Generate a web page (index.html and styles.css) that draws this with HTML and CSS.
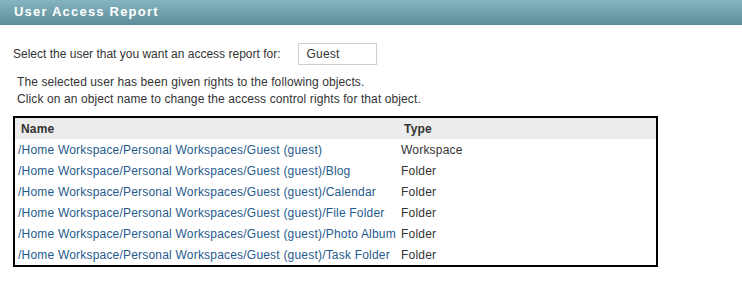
FILE: index.html
```html
<!DOCTYPE html>
<html lang="en">
<head>
    <meta charset="UTF-8">
    <title>User Access Report</title>
    <link rel="stylesheet" href="styles.css">
</head>
<body>
    <div class="titlebar">User Access Report</div>

    <div class="content">
        <div class="pick">
            <span class="pick-label">Select the user that you want an access report for:</span>
            <input type="text" class="user" value="Guest">
        </div>

        <p class="intro">
            The selected user has been given rights to the following objects.<br>
            Click on an object name to change the access control rights for that object.
        </p>

        <table class="report">
            <tr>
                <th class="col-name">Name</th>
                <th>Type</th>
            </tr>
            <tr>
                <td><a href="#">/Home Workspace/Personal Workspaces/Guest (guest)</a></td>
                <td>Workspace</td>
            </tr>
            <tr>
                <td><a href="#">/Home Workspace/Personal Workspaces/Guest (guest)/Blog</a></td>
                <td>Folder</td>
            </tr>
            <tr>
                <td><a href="#">/Home Workspace/Personal Workspaces/Guest (guest)/Calendar</a></td>
                <td>Folder</td>
            </tr>
            <tr>
                <td><a href="#">/Home Workspace/Personal Workspaces/Guest (guest)/File Folder</a></td>
                <td>Folder</td>
            </tr>
            <tr>
                <td><a href="#">/Home Workspace/Personal Workspaces/Guest (guest)/Photo Album</a></td>
                <td>Folder</td>
            </tr>
            <tr>
                <td><a href="#">/Home Workspace/Personal Workspaces/Guest (guest)/Task Folder</a></td>
                <td>Folder</td>
            </tr>
        </table>
    </div>
</body>
</html>
```

FILE: styles.css
```css
body {
    margin: 0;
    font-family: "Liberation Sans", Arial, sans-serif;
    font-size: 12px;
    color: #333;
    background: #fff;
}

.titlebar {
    height: 25px;
    line-height: 24px;
    padding-left: 14px;
    background: linear-gradient(#86b5c1, #5b8d98);
    color: #fff;
    font-size: 13px;
    font-weight: bold;
    letter-spacing: 1.2px;
}

.content {
    padding: 0 13px;
}

.pick {
    display: flex;
    align-items: center;
    gap: 18px;
    margin-top: 18px;
    height: 22px;
}

.user {
    width: 79px;
    height: 22px;
    box-sizing: border-box;
    border: 1px solid #cfcfcf;
    padding: 0 0 0 7px;
    font-family: inherit;
    font-size: 12px;
    letter-spacing: 0.2px;
    color: #333;
}

.intro {
    margin: 9px 0 0 4px;
    line-height: 17px;
    letter-spacing: 0.1px;
}

.report {
    margin-top: 8px;
    width: 645px;
    border: 2px solid #000;
    border-collapse: collapse;
    letter-spacing: 0.2px;
}

.report th {
    background: #ececec;
    height: 21px;
    padding: 0 0 0 6px;
    text-align: left;
    font-weight: bold;
}

.report .col-name {
    width: 377px;
}

.report td {
    height: 21px;
    padding: 0 0 0 3px;
    white-space: nowrap;
}

.report a {
    color: #1f5b8d;
    text-decoration: none;
}
```
